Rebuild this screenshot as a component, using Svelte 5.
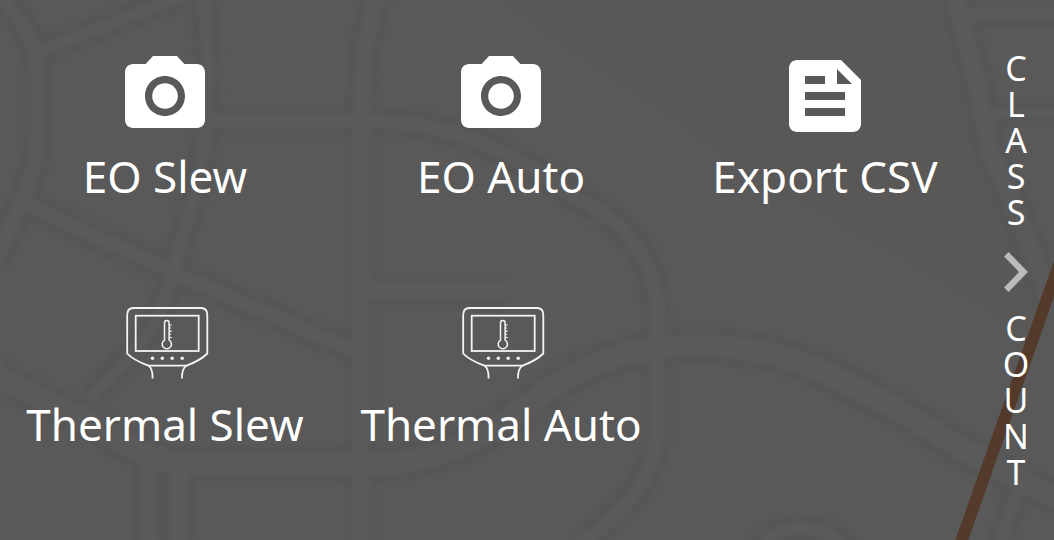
<script>
  const actions = [
    { label: 'EO Slew', icon: 'camera' },
    { label: 'EO Auto', icon: 'camera' },
    { label: 'Export CSV', icon: 'file' },
    { label: 'Thermal Slew', icon: 'thermal' },
    { label: 'Thermal Auto', icon: 'thermal' }
  ];

  const roads = [
    { w: 18, d: 'M376 0Q361 50 361 110V540' },
    { w: 14, d: 'M203 0C212 60 208 150 193 200L172 275Q160 320 140 345L92 396' },
    { w: 16, d: 'M0 0Q38 30 38 80V130C38 180 15 210 -4 262' },
    { w: 14, d: 'M38 52L182 -4' },
    { w: 16, d: 'M206 121H370C450 121 520 155 570 194C625 220 657 260 657 310V430C657 480 620 515 580 545' },
    { w: 16, d: 'M22 202L172 272L352 350' },
    { w: 18, d: 'M366 290H508' },
    { w: 24, d: 'M-4 376L95 424Q150 464 190 464H370C480 464 520 400 580 371C640 340 740 335 820 370Q890 402 960 448L1060 500' },
    { w: 18, d: 'M149 462V540' },
    { w: 20, d: 'M179 468V540' },
    { w: 20, d: 'M954 -4L974 70L990 150L1020 220L1050 300' },
    { w: 14, d: 'M962 15H1060' },
    { w: 10, d: 'M994 114H1060' },
    { w: 14, d: 'M1020 485Q1010 510 1000 545' },
    { w: 14, d: 'M758 550Q775 528 802 528Q830 528 848 550' }
  ];
</script>

<main>
  <svg class="map" viewBox="0 0 1054 540" preserveAspectRatio="xMidYMid slice" aria-hidden="true">
    <defs>
      <filter id="soft" x="-5%" y="-5%" width="110%" height="110%">
        <feGaussianBlur stdDeviation="2.5" />
      </filter>
    </defs>
    <path fill="#595856" d="M500 0H945L965 80L985 160L1030 260L1040 340L1000 318L900 256L800 202L720 154L650 102L560 42Z" />
    <g fill="none" filter="url(#soft)">
      {#each roads as road}
        <path d={road.d} stroke="#545454" stroke-width={road.w + 12} />
      {/each}
      {#each roads as road}
        <path d={road.d} stroke="#5a5a5a" stroke-width={road.w} />
      {/each}
    </g>
    <path d="M1060 262L960 545" stroke="#533a2b" stroke-width="12" />
  </svg>

  <section class="actions">
    {#each actions as action}
      <button type="button" class="action">
        {#if action.icon === 'camera'}
          <svg class="icon" viewBox="0 0 24 24" fill="#fff" aria-hidden="true">
            <circle cx="12" cy="12" r="3.2" />
            <path d="M9 2L7.17 4H4c-1.1 0-2 .9-2 2v12c0 1.1.9 2 2 2h16c1.1 0 2-.9 2-2V6c0-1.1-.9-2-2-2h-3.17L15 2H9zm3 15c-2.76 0-5-2.24-5-5s2.24-5 5-5 5 2.24 5 5-2.24 5-5 5z" />
          </svg>
        {:else if action.icon === 'file'}
          <svg class="icon" viewBox="0 0 24 24" fill="#fff" fill-rule="evenodd" aria-hidden="true">
            <path d="M16 3H5c-1.1 0-2 .9-2 2v14c0 1.1.9 2 2 2h14c1.1 0 2-.9 2-2V8l-5-5zM7 7h5v2H7V7zm10 10H7v-2h10v2zm0-4H7v-2h10v2zm-2-4V5.25L18.75 9H15z" />
          </svg>
        {:else}
          <svg class="icon" viewBox="-2 1 96 96" fill="none" stroke="#f4f4f4" stroke-width="1.8" aria-hidden="true">
            <path d="M14.5 13H82Q88.3 13 88.3 20V58.500Q82 65 67.500 70.700H29.500Q14 65 8.200 58.500V20Q8.200 13 14.500 13Z" />
            <rect x="16.700" y="20.700" width="63" height="35.300" />
            <path d="M29.500 70.700Q33.600 73 33.600 83.500M67.500 70.700Q63 73 63 83.500" />
            <path stroke-width="1.500" d="M45.500 45.200V28Q45.500 25.500 47.800 25.500T50.100 28V45.200A4.600 4.600 0 1 1 45.500 45.200Z" />
            <path stroke-width="1.200" d="M50 30H52.800M50 33H52M50 36.200H52.800M50 39.400H52M50 42.500H52.800" />
            <g fill="#f4f4f4" stroke="none">
              <circle cx="33.500" cy="63.300" r="1.700" />
              <circle cx="43.300" cy="63.300" r="1.700" />
              <circle cx="53.200" cy="63.300" r="1.700" />
              <circle cx="63.200" cy="63.300" r="1.700" />
            </g>
          </svg>
        {/if}
        <span class="label">{action.label}</span>
      </button>
    {/each}
  </section>

  <button type="button" class="rail">
    <span class="word">CLASS</span>
    <svg class="chevron" viewBox="0 0 24 40" aria-hidden="true">
      <path fill="#bababa" d="M0 4.500L4.500 0L24 20L4.500 40L0 35.500L15 20Z" />
    </svg>
    <span class="word">COUNT</span>
  </button>
</main>

<style>
  :global(body) {
    margin: 0;
    background: #595959;
  }

  main {
    position: relative;
    display: flex;
    min-height: 100vh;
    overflow: hidden;
    background: #595959;
    color: #fff;
    font-family: 'Noto Sans', sans-serif;
  }

  .map {
    position: absolute;
    inset: 0;
    width: 100%;
    height: 100%;
  }

  button {
    margin: 0;
    padding: 0;
    border: 0;
    background: none;
    color: inherit;
    font-family: inherit;
    cursor: pointer;
  }

  .actions {
    position: relative;
    flex: 1;
    display: grid;
    grid-template-columns: 330fr 342fr 306fr;
    align-content: start;
    row-gap: 88px;
    padding-top: 48px;
  }

  .action {
    display: flex;
    flex-direction: column;
    align-items: center;
  }

  .icon {
    width: 96px;
    height: 96px;
  }

  .label {
    font-size: 44px;
    line-height: 64px;
    white-space: nowrap;
  }

  .rail {
    position: relative;
    display: flex;
    flex-direction: column;
    align-items: center;
    width: 76px;
    padding-top: 50px;
  }

  .word {
    width: 28px;
    font-size: 34px;
    line-height: 36px;
    text-align: center;
    word-break: break-all;
  }

  .chevron {
    width: 24px;
    height: 40px;
    padding: 22px 0 18px;
  }
</style>
